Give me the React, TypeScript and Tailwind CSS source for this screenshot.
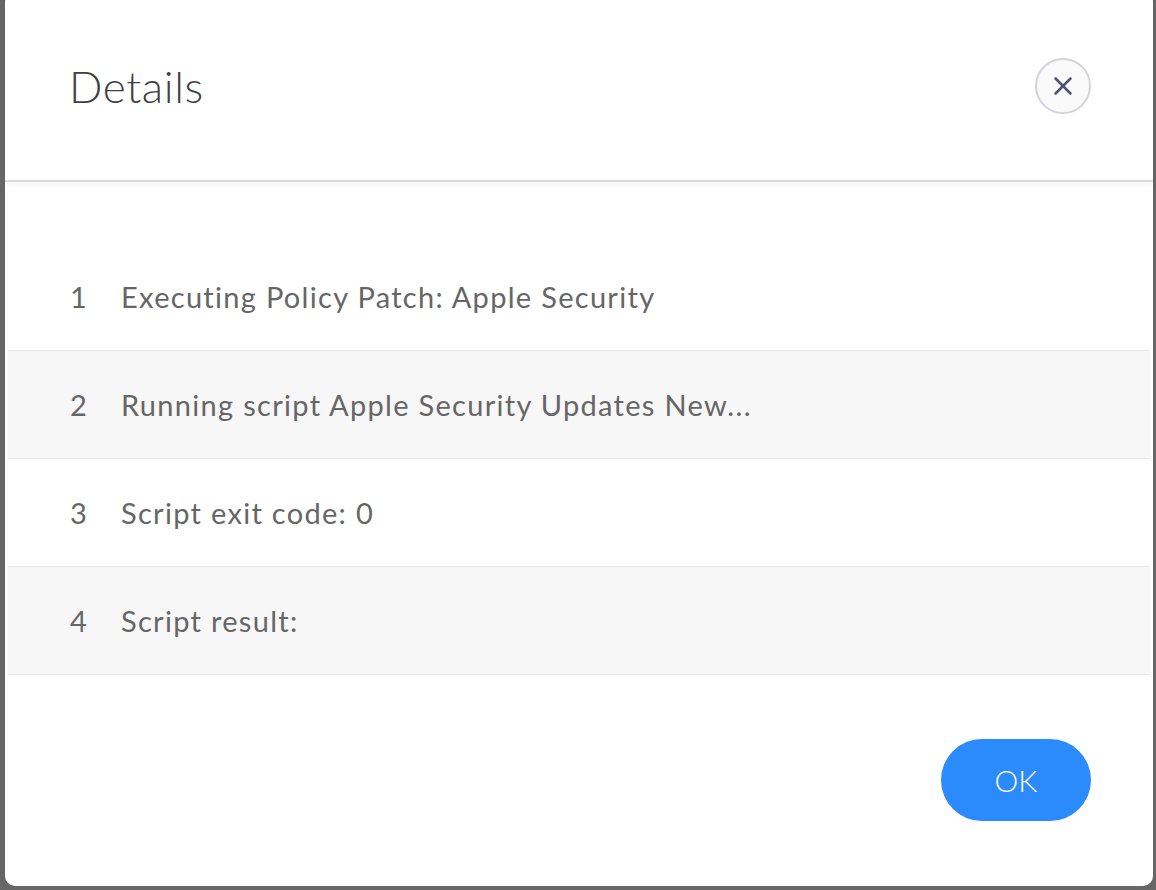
import { X } from "lucide-react";

const lines = [
  "Executing Policy Patch: Apple Security",
  "Running script Apple Security Updates New...",
  "Script exit code: 0",
  "Script result:",
];

export default function App() {
  return (
    <div className="flex h-[890px] flex-col overflow-hidden bg-[#666666] pb-[4px] pl-[5px] pr-[3px] font-['Lato',sans-serif]">
      <div className="-mt-2 flex flex-1 flex-col rounded-[10px] bg-white">
        {/* header */}
        <div className="flex h-[190px] shrink-0 items-center justify-between border-b-2 border-[#d9d9d9] pb-[8px] pl-[64px] pr-[62px] pt-[8px] shadow-[0_3px_6px_rgba(0,0,0,0.04)]">
          <h1 className="text-[44px] font-light leading-none tracking-[0.6px] text-[#3f3f3f]">Details</h1>
          <button className="flex h-[56px] w-[56px] items-center justify-center rounded-full border-2 border-[#d3d3dc] bg-[#fafafb] text-[#4b5573]">
            <X size={30} strokeWidth={2} />
          </button>
        </div>

        {/* rows */}
        <div className="mx-[3px] mt-[61px]">
          {lines.map((text, i) => (
            <div
              key={i}
              className={`flex h-[108px] items-center border-b border-[#e4e4ec] pl-[62px] text-[29px] tracking-[1.3px] text-[#666666] ${
                i % 2 === 1 ? "bg-[#f7f7f7]" : "bg-white"
              }`}
            >
              <span className="w-[51px]">{i + 1}</span>
              <span>{text}</span>
            </div>
          ))}
        </div>

        {/* footer */}
        <div className="mt-[64px] flex justify-end pr-[62px]">
          <button className="flex h-[82px] w-[150px] items-center justify-center rounded-full bg-[#2b8bfc] text-[30px] font-light text-white">
            OK
          </button>
        </div>
      </div>
    </div>
  );
}
